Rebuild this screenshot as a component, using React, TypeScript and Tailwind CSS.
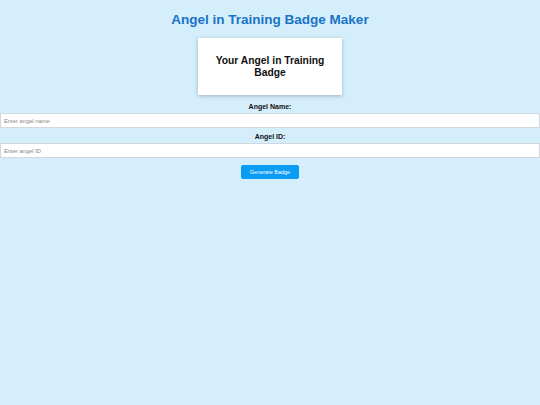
import React from 'react';

const App = () => {
    return (
        <div className="min-h-[405px] w-full bg-[#d4eefb] text-center" style={{ fontFamily: '"Liberation Sans", Arial, sans-serif' }}>
            <h1 className="pt-[12px] text-[13.5px] font-bold leading-[16px] text-[#1a73c9]">Angel in Training Badge Maker</h1>

            <div className="mx-auto mt-[10px] flex h-[57px] w-[144px] items-center justify-center bg-white px-[10px] shadow-[0_1px_4px_rgba(0,0,0,0.25)]">
                <h2 className="text-[10.3px] font-bold leading-[12px] text-[#111]">Your Angel in Training Badge</h2>
            </div>

            <div className="mt-[7px] flex flex-col">
                <label className="text-[7px] font-bold leading-[9px] text-[#111]">Angel Name:</label>
                <input
                    type="text"
                    placeholder="Enter angel name"
                    className="mt-[2px] h-[15px] w-full border border-[#cfd8de] bg-white px-[3px] text-[5.8px] outline-none placeholder:text-[#888]"
                />
                <label className="mt-[4px] text-[7px] font-bold leading-[9px] text-[#111]">Angel ID:</label>
                <input
                    type="text"
                    placeholder="Enter angel ID"
                    className="mt-[2px] h-[15px] w-full border border-[#cfd8de] bg-white px-[3px] text-[5.8px] outline-none placeholder:text-[#888]"
                />
            </div>

            <button className="mx-auto mt-[7px] block h-[14px] w-[58px] rounded-[2px] bg-[#0a9bf5] text-[5.5px] text-white">Generate Badge</button>
        </div>
    );
};

export default App;
